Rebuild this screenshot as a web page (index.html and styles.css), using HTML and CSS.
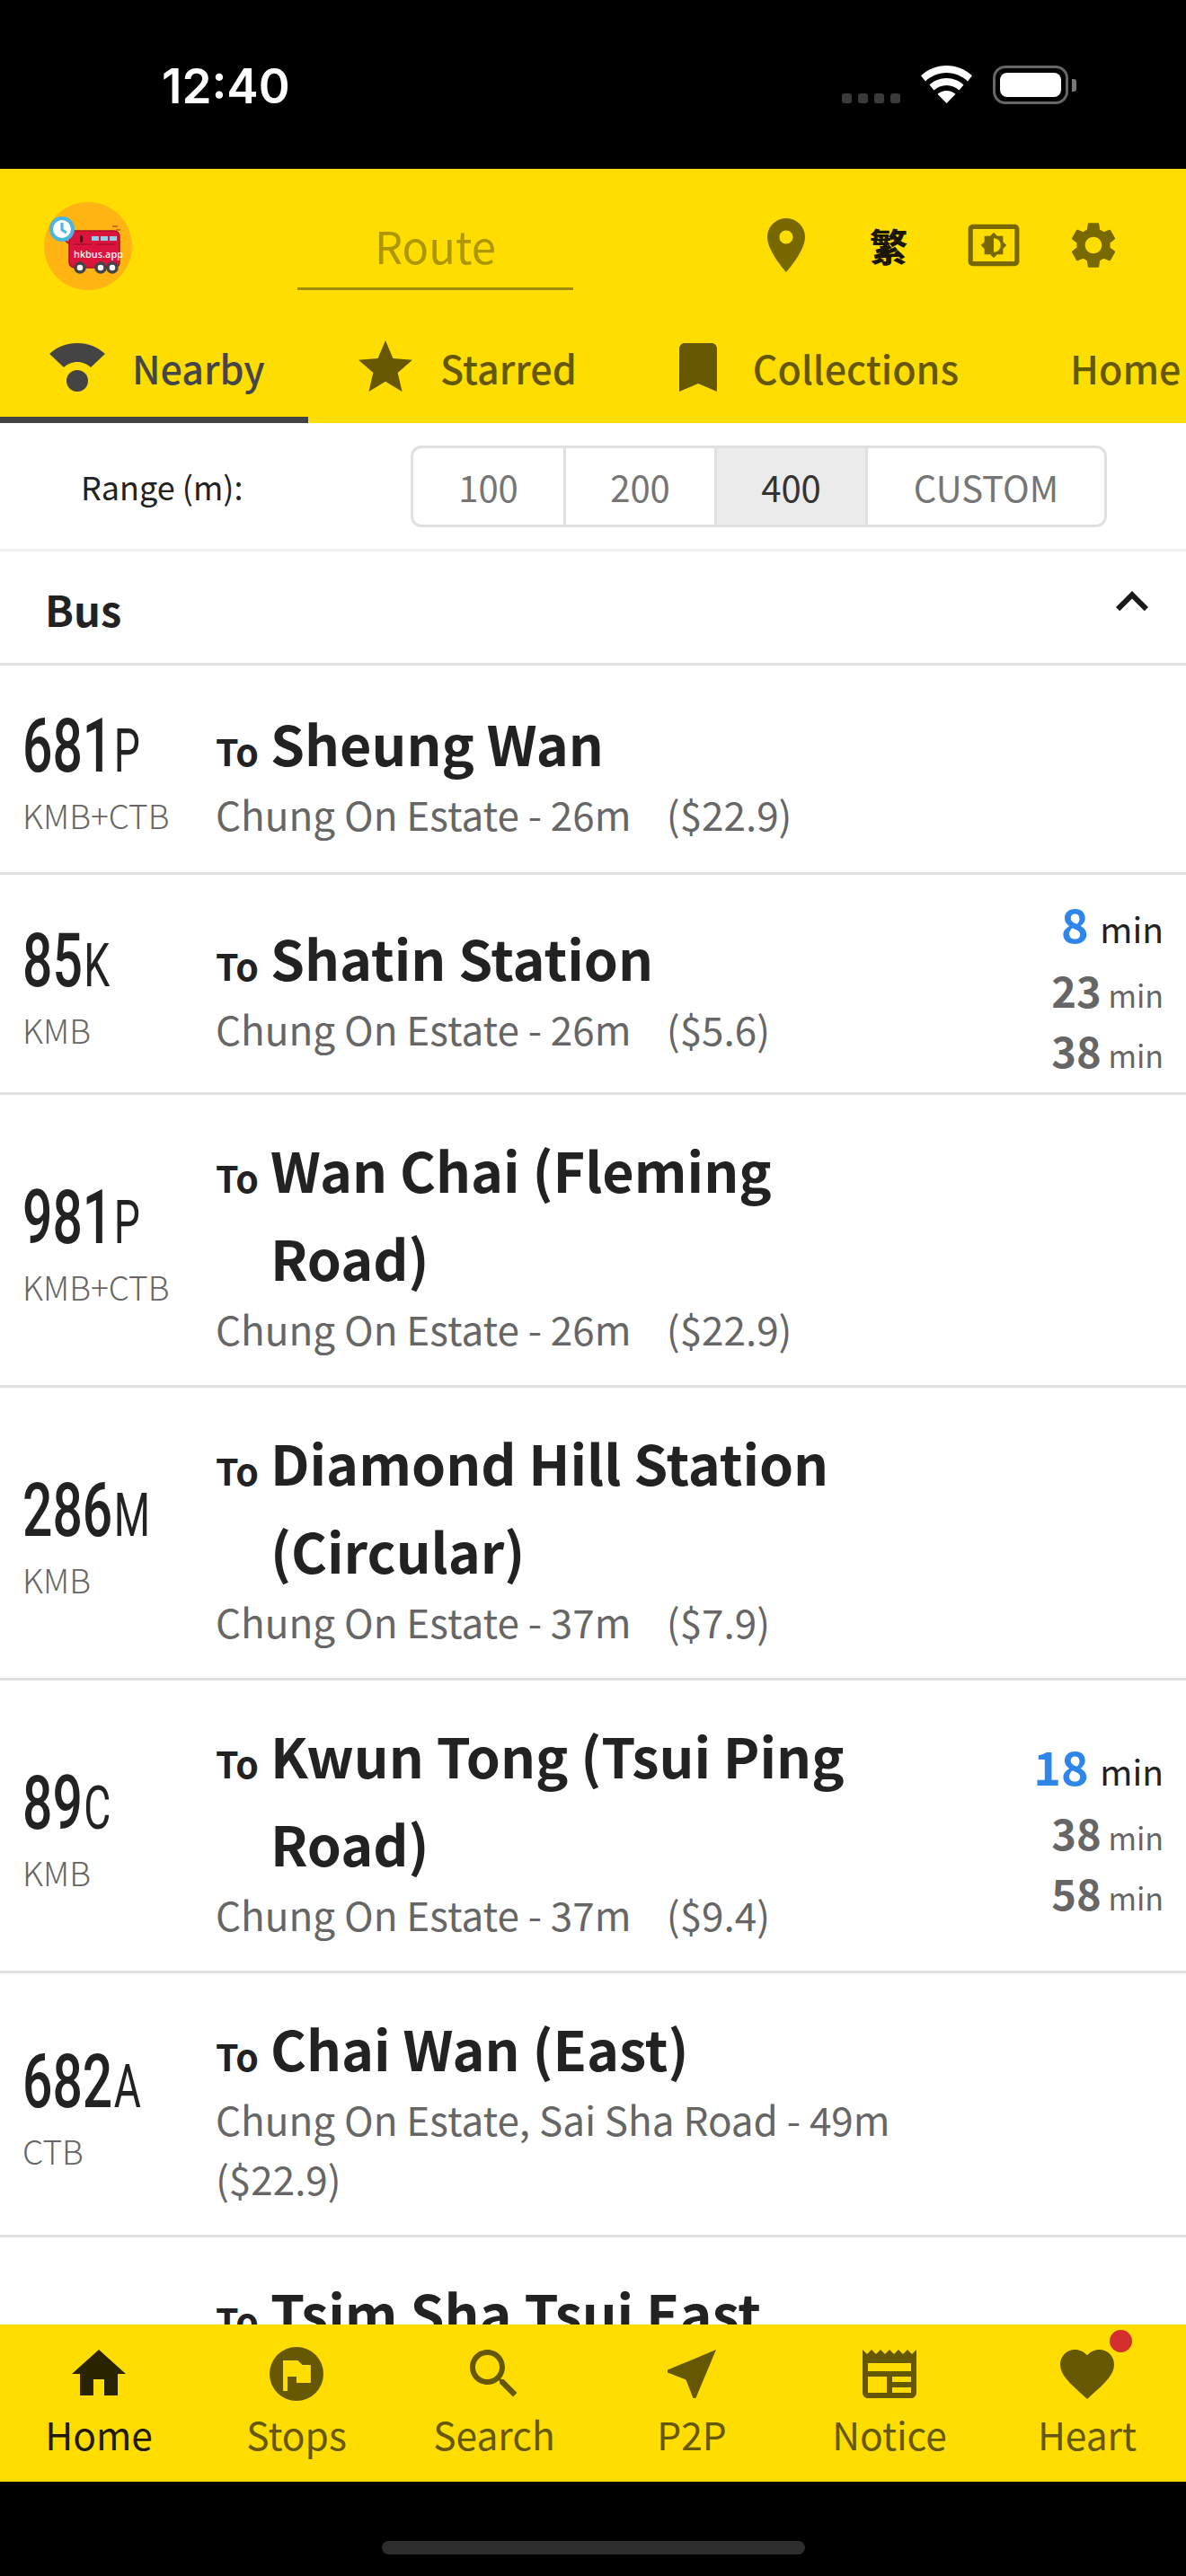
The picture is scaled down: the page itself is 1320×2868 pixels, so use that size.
FILE: index.html
```html
<!DOCTYPE html>
<html lang="en">

<head>
    <meta charset="UTF-8">
    <meta name="viewport" content="width=device-width, initial-scale=1.0">
    <title>hkbus.app</title>
    <link rel="stylesheet" href="styles.css">
</head>

<body>
    <div class="phone">
        <!-- Status bar -->
        <div class="status">
            <div class="clock">12:40</div>
            <div class="status-icons">
                <div class="signal"><i></i><i></i><i></i><i></i></div>
                <svg class="wifi" viewBox="0 0 57 42"><path d="M28.5 0C17.6 0 7.6 4.2 0 11.2l5 6.2C11.3 11.6 19.5 8 28.5 8s17.2 3.6 23.5 9.4l5-6.2C49.4 4.2 39.4 0 28.5 0z"/><path d="M28.5 14c-7.3 0-14 2.8-19 7.4l5 6.1c3.7-3.4 8.6-5.5 14-5.5s10.3 2.1 14 5.5l5-6.1c-5-4.6-11.7-7.4-19-7.4z"/><path d="M28.5 28c-3.8 0-7.3 1.4-10 3.8L28.5 42l10-10.2c-2.7-2.4-6.2-3.8-10-3.8z"/></svg>
                <div class="battery"><div class="battery-fill"></div></div>
                <div class="battery-cap"></div>
            </div>
        </div>

        <!-- App bar -->
        <div class="appbar">
            <svg class="logo" viewBox="0 0 98 98">
                <circle cx="49" cy="49" r="49" fill="#ffb414"/>
                <path d="M22 34c0 8 3 12 9 13" fill="none" stroke="#c8102e" stroke-width="2"/>
                <rect x="28" y="32" width="56" height="41" rx="6" fill="#dc143c" stroke="#a80f2c" stroke-width="1.5"/>
                <rect x="53" y="38" width="8" height="5" fill="#8fd0ea"/>
                <rect x="63" y="38" width="8" height="5" fill="#8fd0ea"/>
                <rect x="73" y="38" width="8" height="5" fill="#8fd0ea"/>
                <rect x="40" y="37" width="3" height="8" rx="1.5" fill="#222"/>
                <path d="M33 47h20M58 47h22" stroke="#a80f2c" stroke-width="1.5"/>
                <text x="33" y="62" class="logo-text">hkbus.app</text>
                <g fill="#fff" stroke="#444" stroke-width="3.5">
                    <circle cx="40" cy="73" r="5"/>
                    <circle cx="63" cy="73" r="5"/>
                    <circle cx="76" cy="73" r="5"/>
                </g>
                <path d="M76 27h6M80 31h5" stroke="#c8532e" stroke-width="1.5"/>
                <circle cx="20" cy="30" r="12" fill="#fff" stroke="#4ab5e0" stroke-width="4"/>
                <path d="M20 23v8l5 3" fill="none" stroke="#4ab5e0" stroke-width="3"/>
            </svg>
            <div class="route-input">Route</div>
            <div class="bar-actions">
                <div class="bar-btn"><svg class="icon-pin" viewBox="0 0 24 24"><path d="M12 2C8.13 2 5 5.13 5 9c0 5.25 7 13 7 13s7-7.75 7-13c0-3.87-3.13-7-7-7zm0 9.5c-1.38 0-2.5-1.12-2.5-2.5s1.12-2.5 2.5-2.5 2.5 1.12 2.5 2.5-1.12 2.5-2.5 2.5z"/></svg></div>
                <div class="bar-btn lang">繁</div>
                <div class="bar-btn bright"><svg class="icon-bar" viewBox="0 0 24 24"><path d="M21 3H3c-1.1 0-2 .9-2 2v14c0 1.1.9 2 2 2h18c1.1 0 2-.9 2-2V5c0-1.1-.9-2-2-2zm0 16.01H3V4.99h18v14.02zM8 16h2.5l1.5 1.5 1.5-1.5H16v-2.5l1.5-1.5-1.5-1.5V8h-2.5L12 6.5 10.5 8H8v2.5L6.5 12 8 13.5V16zm4-7c1.66 0 3 1.34 3 3s-1.34 3-3 3V9z"/></svg></div>
                <div class="bar-btn"><svg class="icon-bar" viewBox="0 0 24 24"><path d="M19.14 12.94c.04-.3.06-.61.06-.94 0-.32-.02-.64-.07-.94l2.03-1.58c.18-.14.23-.41.12-.61l-1.92-3.32c-.12-.22-.37-.29-.59-.22l-2.39.96c-.5-.38-1.03-.7-1.62-.94l-.36-2.54c-.04-.24-.24-.41-.48-.41h-3.84c-.24 0-.43.17-.47.41l-.36 2.54c-.59.24-1.13.57-1.62.94l-2.39-.96c-.22-.08-.47 0-.59.22L2.74 8.87c-.12.21-.08.47.12.61l2.03 1.58c-.05.3-.09.63-.09.94s.02.64.07.94l-2.03 1.58c-.18.14-.23.41-.12.61l1.92 3.32c.12.22.37.29.59.22l2.39-.96c.5.38 1.03.7 1.62.94l.36 2.54c.05.24.24.41.48.41h3.84c.24 0 .44-.17.47-.41l.36-2.54c.59-.24 1.13-.56 1.62-.94l2.39.96c.22.08.47 0 .59-.22l1.92-3.32c.12-.22.07-.47-.12-.61l-2.01-1.58zM12 15.6c-1.98 0-3.6-1.62-3.6-3.6s1.62-3.6 3.6-3.6 3.6 1.62 3.6 3.6-1.62 3.6-3.6 3.6z"/></svg></div>
            </div>
        </div>

        <!-- Tabs -->
        <div class="tabs">
            <div class="tab tab-active">
                <svg viewBox="0 0 24 24"><path d="M1.7 7C4.5 4.4 8 3 12 3s7.5 1.4 10.3 4L17 12c-1.3-1.2-3-2-5-2s-3.7.8-5 2z"/><circle cx="12" cy="17" r="4"/></svg>
                <span>Nearby</span>
            </div>
            <div class="tab">
                <svg viewBox="0 0 24 24"><path d="M12 17.27L18.18 21l-1.64-7.03L22 9.24l-7.19-.61L12 2 9.19 8.63 2 9.24l5.46 4.73L5.82 21z"/></svg>
                <span>Starred</span>
            </div>
            <div class="tab">
                <svg viewBox="0 0 24 24"><path d="M17 3H7c-1.1 0-1.99.9-1.99 2L5 21l7-3 7 3V5c0-1.1-.9-2-2-2z"/></svg>
                <span>Collections</span>
            </div>
            <div class="tab tab-plain"><span>Home</span></div>
        </div>

        <!-- Range -->
        <div class="range">
            <div class="range-label">Range (m):</div>
            <div class="toggle">
                <div class="toggle-btn w100">100</div>
                <div class="toggle-btn w100">200</div>
                <div class="toggle-btn w100 selected">400</div>
                <div class="toggle-btn custom">CUSTOM</div>
            </div>
        </div>

        <div class="group-head">
            <div class="group-name">Bus</div>
            <svg viewBox="0 0 24 24"><path d="M12 8l-6 6 1.41 1.41L12 10.83l4.59 4.58L18 14z"/></svg>
        </div>

        <!-- Route list -->
        <div class="list">
            <div class="row">
                <div class="route"><div class="num"><span class="digits">681</span><span class="suffix">P</span></div><div class="co">KMB+CTB</div></div>
                <div class="info">
                    <div class="dest"><span class="to">To</span>Sheung Wan</div>
                    <div class="sub">Chung On Estate - 26m    ($22.9)</div>
                </div>
            </div>
            <div class="row">
                <div class="route"><div class="num"><span class="digits">85</span><span class="suffix">K</span></div><div class="co">KMB</div></div>
                <div class="info">
                    <div class="dest"><span class="to">To</span>Shatin Station</div>
                    <div class="sub">Chung On Estate - 26m    ($5.6)</div>
                </div>
                <div class="eta">
                    <div class="eta-first"><b>8</b> min</div>
                    <div class="eta-next"><b>23</b> min</div>
                    <div class="eta-next eta-last"><b>38</b> min</div>
                </div>
            </div>
            <div class="row">
                <div class="route"><div class="num"><span class="digits">981</span><span class="suffix">P</span></div><div class="co">KMB+CTB</div></div>
                <div class="info">
                    <div class="dest"><span class="to">To</span>Wan Chai (Fleming Road)</div>
                    <div class="sub">Chung On Estate - 26m    ($22.9)</div>
                </div>
            </div>
            <div class="row">
                <div class="route"><div class="num"><span class="digits">286</span><span class="suffix">M</span></div><div class="co">KMB</div></div>
                <div class="info">
                    <div class="dest"><span class="to">To</span>Diamond Hill Station (Circular)</div>
                    <div class="sub">Chung On Estate - 37m    ($7.9)</div>
                </div>
            </div>
            <div class="row">
                <div class="route"><div class="num"><span class="digits">89</span><span class="suffix">C</span></div><div class="co">KMB</div></div>
                <div class="info">
                    <div class="dest"><span class="to">To</span>Kwun Tong (Tsui Ping Road)</div>
                    <div class="sub">Chung On Estate - 37m    ($9.4)</div>
                </div>
                <div class="eta">
                    <div class="eta-first"><b>18</b> min</div>
                    <div class="eta-next"><b>38</b> min</div>
                    <div class="eta-next eta-last"><b>58</b> min</div>
                </div>
            </div>
            <div class="row">
                <div class="route"><div class="num"><span class="digits">682</span><span class="suffix">A</span></div><div class="co">CTB</div></div>
                <div class="info">
                    <div class="dest"><span class="to">To</span>Chai Wan (East)</div>
                    <div class="sub">Chung On Estate, Sai Sha Road - 49m    ($22.9)</div>
                </div>
            </div>
            <div class="row row-cut">
                <div class="route"></div>
                <div class="info">
                    <div class="dest"><span class="to">To</span>Tsim Sha Tsui East</div>
                </div>
            </div>
        </div>

        <!-- Bottom nav -->
        <div class="nav">
            <div class="nav-item nav-active">
                <svg viewBox="0 0 24 24"><path d="M10 20v-6h4v6h5v-8h3L12 3 2 12h3v8z"/></svg>
                <span>Home</span>
            </div>
            <div class="nav-item">
                <svg class="stops" viewBox="0 0 24 24"><path fill-rule="evenodd" d="M12 2a10 10 0 1 0 0 20 10 10 0 0 0 0-20zM7 7h5.5l1.7 1.7h3.1v6.6H12V13H8.7v5.3H7z"/></svg>
                <span>Stops</span>
            </div>
            <div class="nav-item">
                <svg viewBox="0 0 24 24"><path d="M15.5 14h-.79l-.28-.27C15.41 12.59 16 11.11 16 9.5 16 5.91 13.09 3 9.5 3S3 5.91 3 9.5 5.91 16 9.5 16c1.61 0 3.09-.59 4.23-1.57l.27.28v.79l5 4.99L20.49 19l-4.99-5zm-6 0C7.01 14 5 11.99 5 9.5S7.01 5 9.5 5 14 7.01 14 9.5 11.99 14 9.5 14z"/></svg>
                <span>Search</span>
            </div>
            <div class="nav-item">
                <svg viewBox="0 0 24 24"><path d="M21 3L3 10.53v.98l6.84 2.65L12.48 21h.98L21 3z"/></svg>
                <span>P2P</span>
            </div>
            <div class="nav-item">
                <svg viewBox="0 0 24 24"><path d="M22 3l-1.67 1.67L18.67 3 17 4.67 15.33 3l-1.66 1.67L12 3l-1.67 1.67L8.67 3 7 4.67 5.33 3 3.67 4.67 2 3v16c0 1.1.9 2 2 2h16c1.1 0 2-.9 2-2V3zM11 19H4v-6h7v6zm9 0h-7v-2h7v2zm0-4h-7v-2h7v2zm0-4H4V8h16v3z"/></svg>
                <span>Notice</span>
            </div>
            <div class="nav-item">
                <div class="badge"></div>
                <svg viewBox="0 0 24 24"><path d="M12 21.35l-1.45-1.32C5.4 15.36 2 12.28 2 8.5 2 5.42 4.42 3 7.5 3c1.74 0 3.41.81 4.5 2.09C13.09 3.81 14.76 3 16.5 3 19.58 3 22 5.42 22 8.5c0 3.78-3.4 6.86-8.55 11.54L12 21.35z"/></svg>
                <span>Heart</span>
            </div>
        </div>

        <div class="home-area"><div class="home-bar"></div></div>
    </div>
</body>

</html>
```

FILE: styles.css
```css
/* Global styles */

* {
    box-sizing: border-box;
}

body {
    margin: 0;
    font-family: "Noto Sans CJK TC", "Noto Sans", sans-serif;
    background-color: #fff;
}

.phone {
    width: 1320px;
    height: 2868px;
    display: flex;
    flex-direction: column;
    overflow: hidden;
}

/* Status bar */

.status {
    height: 188px;
    flex: none;
    background-color: #000;
    display: flex;
    align-items: flex-start;
    justify-content: space-between;
    padding: 0 122px 0 180px;
}

.clock {
    font-family: Inter, sans-serif;
    font-size: 53px;
    font-weight: 600;
    line-height: 52px;
    margin-top: 70px;
    color: #fff;
}

.status-icons {
    display: flex;
    align-items: flex-start;
    margin-top: 73px;
}

.signal {
    display: flex;
    gap: 7px;
    margin-top: 31px;
    margin-right: 23px;
}

.signal i {
    width: 11px;
    height: 11px;
    border-radius: 3px;
    background-color: #3a3a3a;
}

.wifi {
    width: 57px;
    height: 42px;
    fill: #fff;
    margin-right: 23px;
}

.battery {
    width: 84px;
    height: 43px;
    border: 3px solid #666;
    border-radius: 14px;
    padding: 5px;
}

.battery-fill {
    height: 100%;
    background-color: #fff;
    border-radius: 8px;
}

.battery-cap {
    width: 5px;
    height: 14px;
    background-color: #777;
    border-radius: 0 3px 3px 0;
    margin-top: 15px;
    margin-left: 4px;
}

/* App bar */

.appbar {
    height: 167px;
    flex: none;
    background-color: #ffdd00;
    display: flex;
    align-items: flex-start;
    padding-left: 49px;
}

.logo {
    width: 98px;
    height: 98px;
    margin-top: 37px;
}

.logo-text {
    font-family: "Noto Sans", sans-serif;
    font-size: 11px;
    font-weight: 500;
    fill: #fff;
}

.route-input {
    width: 307px;
    height: 135px;
    margin-left: 184px;
    border-bottom: 3px solid #a08b00;
    text-align: center;
    color: #ad9600;
    font-size: 49px;
    font-weight: 400;
    line-height: 49px;
    padding-top: 60px;
}

.bar-actions {
    display: flex;
    margin-left: 180px;
    margin-top: 49px;
}

.bar-btn {
    width: 114px;
    height: 72px;
    display: flex;
    align-items: center;
    justify-content: center;
    fill: #786800;
}

.bright {
    padding-left: 6px;
}

.icon-pin {
    width: 72px;
    height: 72px;
}

.icon-bar {
    width: 62px;
    height: 62px;
}

.lang {
    font-size: 42px;
    font-weight: 900;
    color: #1a1600;
    line-height: 72px;
}

/* Tabs */

.tabs {
    height: 116px;
    flex: none;
    background-color: #ffdd00;
    display: flex;
    white-space: nowrap;
    color: #665800;
    fill: #665800;
    font-size: 43px;
    font-weight: 500;
}

.tab {
    height: 116px;
    display: flex;
    align-items: flex-start;
    padding: 18px 49px 0 50px;
    flex: none;
}

.tab svg {
    width: 72px;
    height: 72px;
    margin-right: 25px;
    flex: none;
}

.tab span {
    line-height: 72px;
}

.tab-active {
    width: 343px;
    color: #44464a;
    fill: #444;
    border-bottom: 7px solid #444;
}

.tab-plain {
    padding-left: 75px;
}

/* Range */

.range {
    height: 143px;
    flex: none;
    display: flex;
    align-items: flex-start;
    border-bottom: 3px solid #eee;
    padding-left: 90px;
}

.range-label {
    width: 367px;
    margin-top: 43px;
    font-size: 36px;
    line-height: 54px;
    color: #222;
}

.toggle {
    display: flex;
    height: 91px;
    margin-top: 25px;
    border: 3px solid #e0e0e0;
    border-radius: 12px;
    overflow: hidden;
    color: #757575;
    font-size: 40px;
}

.toggle-btn {
    display: flex;
    align-items: center;
    justify-content: center;
    border-left: 3px solid #e0e0e0;
}

.toggle-btn:first-child {
    border-left: 0;
}

.w100 {
    width: 168px;
}

.w100:first-child {
    width: 167px;
}

.custom {
    width: 266px;
}

.selected {
    background-color: #ebebeb;
    color: #333;
}

.group-head {
    height: 127px;
    flex: none;
    display: flex;
    justify-content: space-between;
    border-bottom: 3px solid #e4e4e4;
    padding: 20px 24px 0 50px;
    fill: #1a1a1a;
}

.group-name {
    font-size: 47px;
    font-weight: 700;
    line-height: 70px;
    margin-top: 9px;
    color: #222;
}

.group-head svg {
    width: 72px;
    height: 72px;
}

/* Route list */

.list {
    flex: 1;
    overflow: hidden;
}

.row {
    display: flex;
    align-items: center;
    min-height: 233px;
    border-bottom: 3px solid #e0e0e0;
    padding: 14px 25px;
}

.row-cut {
    align-items: flex-start;
}

.route {
    width: 215px;
    flex: none;
    margin-top: 7px;
}

.num {
    height: 92px;
    line-height: 92px;
    white-space: nowrap;
    color: #222;
    font-family: Roboto, sans-serif;
    font-weight: 500;
    transform: scaleX(.7);
    transform-origin: left center;
}

.digits {
    font-size: 84px;
}

.suffix {
    font-size: 66px;
    font-weight: 400;
    margin-left: 2px;
}

.co {
    font-size: 37px;
    line-height: 54px;
    margin-top: 3px;
    color: #666;
    font-weight: 300;
}

.info {
    width: 760px;
    flex: none;
    padding: 20px 0 16px;
}

.dest {
    font-size: 61px;
    font-weight: 700;
    line-height: 98px;
    color: #222;
    padding-left: 61px;
    text-indent: -61px;
}

.to {
    display: inline-block;
    width: 61px;
    text-indent: 0;
    font-size: 41px;
    line-height: 40px;
}

.sub {
    font-size: 44px;
    line-height: 66px;
    margin-top: -3px;
    color: #666;
    white-space: pre-wrap;
}

.eta {
    flex: 1;
    text-align: right;
    white-space: nowrap;
    margin-top: 5px;
    margin-bottom: -5px;
}

.eta-first {
    font-size: 39px;
    line-height: 80px;
    color: #222;
}

.eta-first b {
    font-size: 52px;
    font-weight: 700;
    line-height: 40px;
    color: #2f86e8;
    margin-right: 4px;
}

.eta-next {
    font-size: 34px;
    line-height: 70px;
    color: #666;
}

.eta-next b {
    font-size: 47px;
    font-weight: 700;
    line-height: 40px;
}

.eta-last {
    line-height: 64px;
}

/* Bottom nav */

.nav {
    height: 175px;
    flex: none;
    background-color: #ffdd00;
    display: flex;
    color: #665800;
    fill: #665800;
}

.nav-item {
    width: 220px;
    display: flex;
    flex-direction: column;
    align-items: center;
    padding-top: 19px;
    position: relative;
    font-size: 42.5px;
}

.nav-item svg {
    width: 72px;
    height: 72px;
    flex: none;
}

.nav-item span {
    line-height: 60px;
    margin-top: 1px;
}

.nav-active {
    color: #1f1a00;
    fill: #2a2300;
}

.badge {
    position: absolute;
    left: 135px;
    top: 6px;
    width: 25px;
    height: 25px;
    border-radius: 50%;
    background-color: #d32f2f;
}

.home-area {
    height: 105px;
    flex: none;
    background-color: #000;
    padding-top: 66px;
}

.home-bar {
    width: 471px;
    height: 15px;
    margin-left: 425px;
    border-radius: 8px;
    background-color: #2e2e2e;
}
```
